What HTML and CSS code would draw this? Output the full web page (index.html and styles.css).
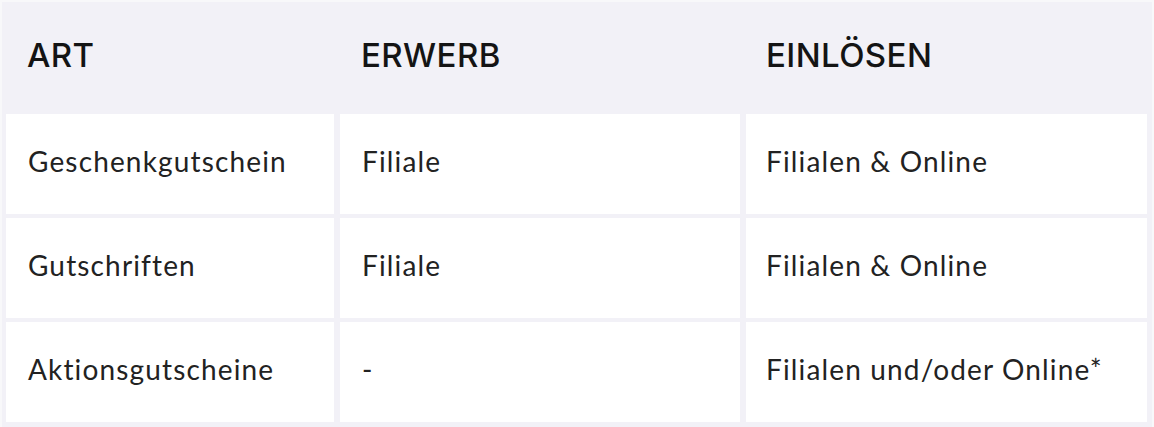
FILE: index.html
```html
<!DOCTYPE html>
<html lang="de">

<head>
    <meta charset="UTF-8">
    <meta name="viewport" content="width=device-width, initial-scale=1.0">
    <title>Gutscheine</title>
    <link rel="stylesheet" href="styles.css">
</head>

<body>

    <div class="tab">
        <div class="head">ART</div>
        <div class="head">ERWERB</div>
        <div class="head last">EINLÖSEN</div>

        <div class="cell">Geschenkgutschein</div>
        <div class="cell">Filiale</div>
        <div class="cell last">Filialen &amp; Online</div>

        <div class="cell">Gutschriften</div>
        <div class="cell">Filiale</div>
        <div class="cell last">Filialen &amp; Online</div>

        <div class="cell">Aktionsgutscheine</div>
        <div class="cell">-</div>
        <div class="cell last">Filialen und/oder Online*</div>
    </div>

</body>

</html>
```

FILE: styles.css
```css
body {
    background-color: #f8f8fa;
    margin: 0;
}

.tab {
    margin: 2px 0 0 2px;
    width: 1150px;
    box-sizing: border-box;
    display: grid;
    grid-template-columns: 328px 400px 401px;
    grid-template-rows: 108px 100px 100px 100px;
    column-gap: 6px;
    row-gap: 4px;
    padding: 0 5px 5px 4px;
    background-color: #f2f1f7;
}

.head {
    display: flex;
    align-items: center;
    padding-left: 21px;
    padding-bottom: 2px;
    font-family: "Inter", sans-serif;
    font-size: 33px;
    font-weight: 500;
    letter-spacing: 0.4px;
    color: #141414;
}

.cell {
    display: flex;
    align-items: center;
    padding-left: 22px;
    padding-bottom: 6px;
    background-color: #fff;
    font-family: "Lato", sans-serif;
    font-size: 28px;
    letter-spacing: 1.15px;
    color: #222222;
}

.last {
    padding-left: 20px;
}
```
